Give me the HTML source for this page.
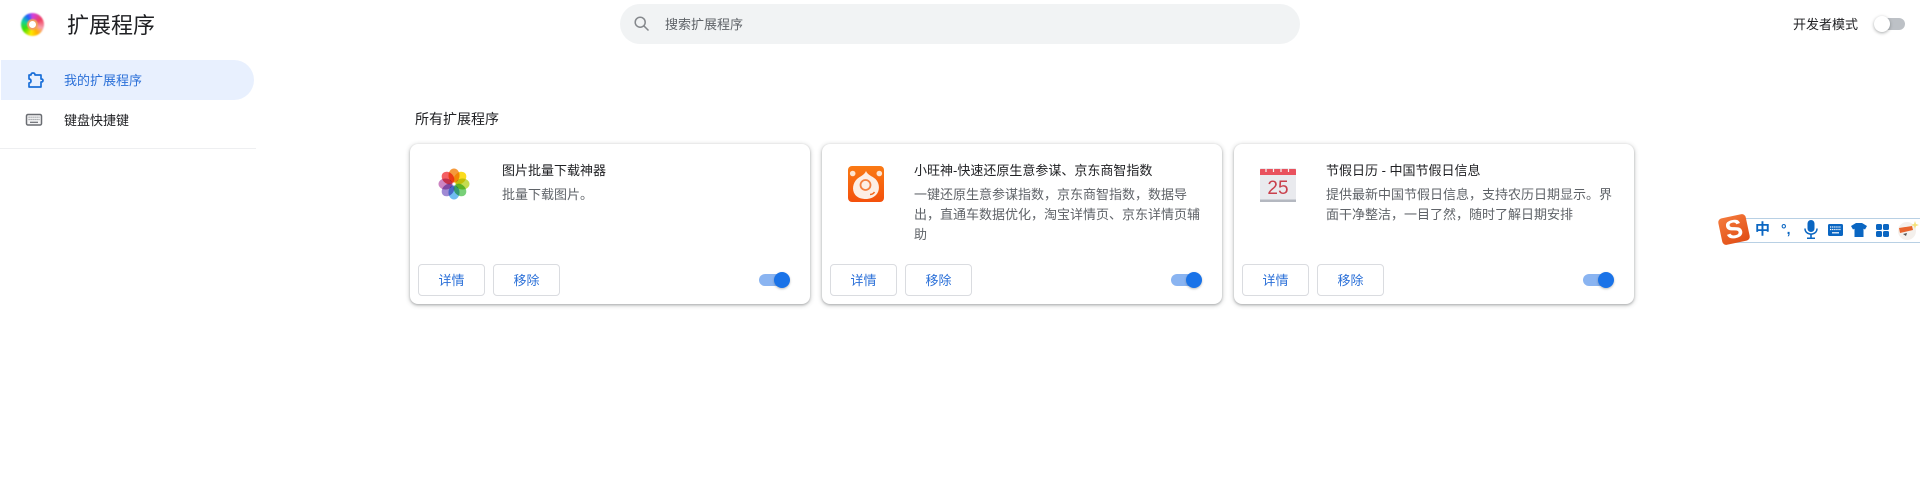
<!DOCTYPE html>
<html lang="zh-CN">
<head>
<meta charset="utf-8">
<title>扩展程序</title>
<style>
html,body{margin:0;padding:0;width:1920px;height:477px;overflow:hidden;background:#fff}
body{position:relative;font-family:"Liberation Sans","Noto Sans CJK SC",sans-serif;font-size:13px;color:#202124}
.a{position:absolute;white-space:nowrap}
.card{position:absolute;top:144px;width:400px;height:160px;background:#fff;border-radius:8px;box-shadow:0 1px 2px rgba(60,64,67,.3),0 1px 4px 1px rgba(60,64,67,.2)}
.t{position:absolute;left:92px;top:17px;line-height:20px;font-size:13px;color:#202124;white-space:nowrap}
.d{position:absolute;left:92px;top:41px;width:288px;line-height:20px;font-size:13px;color:#5f6368}
.b{position:absolute;top:120px;width:65px;height:30px;border:1px solid #dadce0;border-radius:4px;text-align:center;line-height:32px;color:#2b70d8;font-size:13px;background:#fff}
.b1{left:8px}.b2{left:83px}
.tr{position:absolute;left:349px;top:130px;width:30px;height:12px;border-radius:6px;background:#8ab4f1}
.kn{position:absolute;left:364px;top:128px;width:16px;height:16px;border-radius:50%;background:#1a73e8;box-shadow:0 1px 2px rgba(60,64,67,.35)}
.i{position:absolute}
.p{mix-blend-mode:multiply}
</style>
</head>
<body>

<div class="i" style="left:21px;top:13px;width:23px;height:23px;border-radius:50%;background:conic-gradient(#d040e0 0deg,#f04060 60deg,#f8a0b0 110deg,#ffb000 150deg,#ffe800 190deg,#40e000 240deg,#10d0a0 290deg,#2060ff 330deg,#d040e0 360deg);filter:blur(.8px)"></div>
<div class="i" style="left:27px;top:19px;width:11px;height:11px;border-radius:50%;background:#f0a060;filter:blur(.5px)"></div>
<div class="i" style="left:29px;top:21px;width:7px;height:7px;border-radius:50%;background:#fff"></div>
<div class="a" style="left:67px;top:10px;font-size:22px;line-height:32px;color:#202124">扩展程序</div>

<div class="i" style="left:1px;top:60px;width:253px;height:40px;background:#e8f0fe;border-radius:0 20px 20px 0"></div>
<svg class="i" style="left:26px;top:71px" width="18" height="18" viewBox="0 0 18 18" fill="none" stroke="#1a6fd8" stroke-width="1.700" stroke-linejoin="round"><path d="M5 4Q5 2 7 2Q9 2 9 4H15V8Q17 8 17 9.500Q17 11 15 11V16H3V12Q5 12 5 10Q5 8 3 8V4Z"/></svg>
<div class="a" style="left:64px;top:71px;line-height:20px;color:#2b70d8">我的扩展程序</div>

<svg class="i" style="left:25px;top:113px" width="18" height="14" viewBox="0 0 18 14"><rect x="1.500" y="1.500" width="15" height="10.500" rx="1.500" fill="#f4f4f5" stroke="#6a6d72" stroke-width="1.500"/><path d="M3.500 4.200h11M3.500 6.500h11" stroke="#909398" stroke-width="1.200" stroke-dasharray="1.200 .8"/><path d="M5 9.300h8" stroke="#6a6d72" stroke-width="1.200"/></svg>
<div class="a" style="left:64px;top:111px;line-height:20px;color:#202124">键盘快捷键</div>
<div class="i" style="left:0;top:148px;width:256px;height:1px;background:#eeeff1"></div>

<div class="i" style="left:620px;top:4px;width:680px;height:40px;border-radius:20px;background:#f1f3f4"></div>
<svg class="i" style="left:633px;top:15px" width="18" height="18" viewBox="0 0 18 18" fill="none" stroke="#85888c" stroke-width="1.500"><circle cx="7.200" cy="7.200" r="5"/><path d="M10.800 10.800L15.500 15.500"/></svg>
<div class="a" style="left:665px;top:15px;line-height:20px;font-size:13px;color:#5f6368">搜索扩展程序</div>

<div class="a" style="left:1793px;top:15px;line-height:20px;color:#202124">开发者模式</div>
<div class="i" style="left:1875px;top:18px;width:30px;height:12px;border-radius:6px;background:#bdc1c6"></div>
<div class="i" style="left:1874px;top:16px;width:16px;height:16px;border-radius:50%;background:#fff;box-shadow:0 1px 3px rgba(60,64,67,.45)"></div>

<div class="a" style="left:415px;top:109px;line-height:20px;font-size:14px;color:#202124">所有扩展程序</div>

<div class="card" style="left:410px">
  <svg class="i" style="left:27px;top:23px;isolation:isolate" width="34" height="34" viewBox="-17 -17 34 34">
    <ellipse class="p" cx="0" cy="-8.500" rx="5.500" ry="7" fill="#f59a3c"/>
    <ellipse class="p" cx="0" cy="-8.500" rx="5.500" ry="7" fill="#fbdc1e" transform="rotate(45)"/>
    <ellipse class="p" cx="0" cy="-8.500" rx="5.500" ry="7" fill="#c4dc50" transform="rotate(90)"/>
    <ellipse class="p" cx="0" cy="-8.500" rx="5.500" ry="7" fill="#78d078" transform="rotate(135)"/>
    <ellipse class="p" cx="0" cy="-8.500" rx="5.500" ry="7" fill="#70bcf0" transform="rotate(180)"/>
    <ellipse class="p" cx="0" cy="-8.500" rx="5.500" ry="7" fill="#a08ad4" transform="rotate(225)"/>
    <ellipse class="p" cx="0" cy="-8.500" rx="5.500" ry="7" fill="#cc84c2" transform="rotate(270)"/>
    <ellipse class="p" cx="0" cy="-8.500" rx="5.500" ry="7" fill="#f46064" transform="rotate(315)"/>
  </svg>
  <div class="t">图片批量下载神器</div>
  <div class="d">批量下载图片。</div>
  <div class="b b1">详情</div><div class="b b2">移除</div>
  <div class="tr"></div><div class="kn"></div>
</div>

<div class="card" style="left:822px">
  <svg class="i" style="left:26px;top:22px" width="36" height="36" viewBox="0 0 36 36">
    <defs><linearGradient id="o" x1="0" y1="0" x2="0" y2="1"><stop offset="0" stop-color="#fa7a14"/><stop offset="1" stop-color="#f4500c"/></linearGradient></defs>
    <rect width="36" height="36" rx="4" fill="url(#o)"/>
    <circle cx="4.700" cy="7.500" r="2.800" fill="#fde4d0"/>
    <circle cx="31.300" cy="7.500" r="2.800" fill="#fde4d0"/>
    <path d="M18 5C19.500 9 24 10 27.500 13C32 17.500 32 25 28 29C25 32 21 33 18 33C14 33 9.500 32 7 28.500C3.500 23.500 5 17 9 13C12.500 10 16.500 9 18 5Z" fill="#fdeee4"/>
    <circle cx="17.500" cy="19" r="5" fill="none" stroke="#f48040" stroke-width="1.800"/>
    <path d="M22 28.500Q25 28.500 26.500 26" fill="none" stroke="#f4661a" stroke-width="1.500"/>
  </svg>
  <div class="t">小旺神-快速还原生意参谋、京东商智指数</div>
  <div class="d">一键还原生意参谋指数，京东商智指数，数据导出，直通车数据优化，淘宝详情页、京东详情页辅助</div>
  <div class="b b1">详情</div><div class="b b2">移除</div>
  <div class="tr"></div><div class="kn"></div>
</div>

<div class="card" style="left:1234px">
  <svg class="i" style="left:26px;top:24px" width="36" height="34" viewBox="0 0 36 34">
    <rect y="0" width="36" height="34" rx="1" fill="#e9eaee"/>
    <rect y="31.500" width="36" height="2.500" fill="#b4b8c0"/>
    <path d="M0 7V1.500A1 1 0 0 1 1 1H35A1 1 0 0 1 36 1.500V7Z" fill="#e9525e"/>
    <path d="M6 0v4M13.500 0v4M21 0v4M28.500 0v4" stroke="#f5f5f5" stroke-width="1.200"/>
    <text x="18" y="26" text-anchor="middle" font-family="Liberation Sans,sans-serif" font-size="19" fill="#c9404c">25</text>
  </svg>
  <div class="t">节假日历 - 中国节假日信息</div>
  <div class="d">提供最新中国节假日信息，支持农历日期显示。界面干净整洁，一目了然，随时了解日期安排</div>
  <div class="b b1">详情</div><div class="b b2">移除</div>
  <div class="tr"></div><div class="kn"></div>
</div>

<div class="i" style="left:1735px;top:218px;width:184px;height:23px;background:#fff;border:1px solid #b8d0e4"></div>
<div class="i" style="left:1720px;top:216px;width:28px;height:27px;border-radius:4px;background:linear-gradient(160deg,#f47a3c,#e04c14);transform:rotate(-12deg)"></div>
<div class="a" style="left:1720px;top:216px;width:28px;text-align:center;line-height:27px;font-size:26px;font-weight:bold;color:#fff;transform:rotate(-12deg)">S</div>
<div class="a" style="left:1755px;top:220px;line-height:20px;font-size:15px;font-weight:bold;color:#0a66c2">中</div>
<div class="a" style="left:1781px;top:219px;line-height:20px;font-size:14px;font-weight:bold;color:#0a66c2">°,</div>
<svg class="i" style="left:1803px;top:219px" width="16" height="22" viewBox="0 0 16 22" fill="#0a66c2"><rect x="4.500" y="1" width="7" height="12" rx="3.500"/><path d="M2 9.500C2 17 14 17 14 9.500" fill="none" stroke="#0a66c2" stroke-width="1.500"/><path d="M7.200 15h1.600v3.500H7.200zM4 18.500h8V20H4z"/></svg>
<svg class="i" style="left:1828px;top:224px" width="15" height="12" viewBox="0 0 15 12"><rect width="15" height="12" rx="1.500" fill="#0a66c2"/><path d="M2 3h11M2 5.500h11" stroke="#fff" stroke-width="1.200" stroke-dasharray="1.300 .8"/><path d="M4 8.800h7" stroke="#fff" stroke-width="1.200"/></svg>
<svg class="i" style="left:1851px;top:223px" width="16" height="14" viewBox="0 0 16 14" fill="#0a66c2"><path d="M5 0H11L16 3 14 6.500 12.500 5.800V14H3.500V5.800L2 6.500 0 3Z"/></svg>
<svg class="i" style="left:1876px;top:224px" width="13" height="13" viewBox="0 0 13 13" fill="#0a66c2"><rect width="6" height="6" rx="1.500"/><rect x="7" width="6" height="6" rx="1.500"/><rect y="7" width="6" height="6" rx="1.500"/><rect x="7" y="7" width="6" height="6" rx="1.500"/></svg>
<svg class="i" style="left:1897px;top:220px" width="22" height="20" viewBox="0 0 22 20"><circle cx="10" cy="11" r="9" fill="#f4f0ec"/><path d="M2 8L15 6 16 10 3 13Z" fill="#e8642c"/><path d="M6 14L10 13 9 16Z" fill="#555"/><path d="M18 1L19 4 22 5 19 6 18 9 17 6 14 5 17 4Z" fill="#f5e27a"/></svg>

</body>
</html>
